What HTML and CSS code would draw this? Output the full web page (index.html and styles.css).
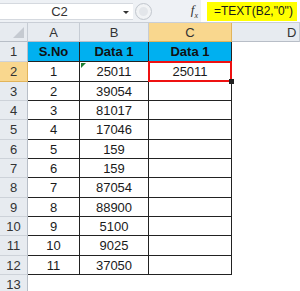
FILE: index.html
```html
<!DOCTYPE html>
<html lang="en">
<head>
    <meta charset="UTF-8">
    <title>TEXT function</title>
    <link rel="stylesheet" href="styles.css">
</head>
<body>
    <div class="formula-bar">
        <div class="name-box">
            <span class="ref">C2</span>
            <span class="arrow"></span>
        </div>
        <div class="fx-area">
            <span class="knob"></span>
            <span class="fx">f<sub>x</sub></span>
        </div>
        <div class="formula"><span class="hl">=TEXT(B2,"0")</span></div>
    </div>

    <div class="sheet">
        <div class="corner"><span class="tri"></span></div>
        <div class="col-head">A</div>
        <div class="col-head">B</div>
        <div class="col-head sel">C</div>
        <div class="col-head last">D</div>

        <div class="row-head">1</div>
        <div class="cell title">S.No</div>
        <div class="cell title">Data 1</div>
        <div class="cell title">Data 1</div>
        <div class="empty"></div>

        <div class="row-head sel">2</div>
        <div class="cell">1</div>
        <div class="cell num-text">25011</div>
        <div class="cell active">25011</div>
        <div class="empty"></div>

        <div class="row-head">3</div>
        <div class="cell">2</div>
        <div class="cell">39054</div>
        <div class="cell"></div>
        <div class="empty"></div>

        <div class="row-head">4</div>
        <div class="cell">3</div>
        <div class="cell">81017</div>
        <div class="cell"></div>
        <div class="empty"></div>

        <div class="row-head">5</div>
        <div class="cell">4</div>
        <div class="cell">17046</div>
        <div class="cell"></div>
        <div class="empty"></div>

        <div class="row-head">6</div>
        <div class="cell">5</div>
        <div class="cell">159</div>
        <div class="cell"></div>
        <div class="empty"></div>

        <div class="row-head">7</div>
        <div class="cell">6</div>
        <div class="cell">159</div>
        <div class="cell"></div>
        <div class="empty"></div>

        <div class="row-head">8</div>
        <div class="cell">7</div>
        <div class="cell">87054</div>
        <div class="cell"></div>
        <div class="empty"></div>

        <div class="row-head">9</div>
        <div class="cell">8</div>
        <div class="cell">88900</div>
        <div class="cell"></div>
        <div class="empty"></div>

        <div class="row-head">10</div>
        <div class="cell">9</div>
        <div class="cell">5100</div>
        <div class="cell"></div>
        <div class="empty"></div>

        <div class="row-head">11</div>
        <div class="cell">10</div>
        <div class="cell">9025</div>
        <div class="cell"></div>
        <div class="empty"></div>

        <div class="row-head">12</div>
        <div class="cell">11</div>
        <div class="cell">37050</div>
        <div class="cell"></div>
        <div class="empty"></div>

        <div class="row-head">13</div>
        <div class="empty"></div>
        <div class="empty"></div>
        <div class="empty"></div>
        <div class="empty"></div>
    </div>
</body>
</html>
```

FILE: styles.css
```css
body {
    margin: 0;
    width: 300px;
    height: 291px;
    overflow: hidden;
    background: #fff;
    font-family: "Liberation Sans", Arial, sans-serif;
    font-size: 13px;
    color: #1a1a1a;
}
.formula-bar {
    display: flex;
    height: 23px;
    background: #eef1f5;
    border-bottom: 1px solid #c9ced6;
    box-sizing: border-box;
}
.name-box {
    width: 133px;
    flex-shrink: 0;
    margin: 3px 0 2px 0;
    background: #fff;
    border-top: 1px solid #d5d9df;
    border-bottom: 1px solid #d5d9df;
    position: relative;
    display: flex;
    align-items: center;
}
.name-box .ref {
    flex: 1;
    text-align: center;
    padding-right: 14px;
    color: #333;
}
.arrow {
    position: absolute;
    right: 4px;
    top: 7px;
    width: 0;
    height: 0;
    border-left: 3px solid transparent;
    border-right: 3px solid transparent;
    border-top: 3px solid #333;
}
.fx-area {
    width: 68px;
    flex-shrink: 0;
    display: flex;
    align-items: center;
}
.knob {
    width: 15px;
    height: 15px;
    margin-left: 2px;
    border-radius: 50%;
    background: #e3e6ea;
    border: 1px solid #c3c8cf;
    box-shadow: inset 0 0 0 3px #f1f3f5;
}
.fx {
    margin-left: auto;
    margin-right: 3px;
    font-family: "Liberation Serif", serif;
    font-style: italic;
    font-size: 13px;
    color: #333;
}
.fx sub {
    font-size: 8px;
}
.formula {
    flex: 1;
    min-width: 0;
    overflow: hidden;
    background: #fff;
    display: flex;
    align-items: center;
    padding-left: 6px;
}
.hl {
    background: #ffff00;
    height: 19px;
    line-height: 19px;
    padding: 0 4px 0 7px;
    font-size: 12px;
    white-space: nowrap;
}
.sheet {
    display: grid;
    grid-template-columns: 28px 52px 69px 83px 1fr;
    grid-template-rows: 19px 20px 20px 19px 19px 20px 19px 19px 20px 19px 19px 20px 19px 20px;
}
.corner, .col-head, .row-head {
    background: #e7ebf0;
    color: #333;
    display: flex;
    align-items: center;
    justify-content: center;
    font-size: 13px;
}
.corner {
    border-right: 1px solid #c6ccd4;
    border-bottom: 1px solid #b8bec7;
    position: relative;
}
.tri {
    position: absolute;
    right: 3px;
    bottom: 3px;
    width: 0;
    height: 0;
    border-left: 11px solid transparent;
    border-bottom: 11px solid #c5cad1;
}
.col-head {
    border-right: 1px solid #c6ccd4;
    border-bottom: 1px solid #b8bec7;
}
.col-head.last {
    justify-content: flex-start;
    padding-left: 55px;
}
.row-head {
    border-right: 1px solid #b8bec7;
    border-bottom: 1px solid #cdd2d9;
}
.sel {
    background: #f9d78e;
    border-color: #e2b45a;
}
.cell {
    display: flex;
    align-items: center;
    justify-content: center;
    border-right: 1px solid #222;
    border-bottom: 1px solid #222;
}
.title {
    background: #00b0f0;
    font-weight: bold;
    color: #111;
}
.num-text {
    position: relative;
}
.num-text::before {
    content: "";
    position: absolute;
    left: 1px;
    top: 1px;
    border-top: 5px solid #1d7f32;
    border-right: 5px solid transparent;
}
.active {
    position: relative;
}
.active::after {
    content: "";
    position: absolute;
    left: -1px;
    top: -1px;
    right: -1px;
    bottom: -1px;
    border: 2px solid #ee1111;
}
.active::before {
    content: "";
    position: absolute;
    right: -3px;
    bottom: -3px;
    width: 5px;
    height: 5px;
    background: #222;
    z-index: 1;
}
.empty {
    background: #fff;
}
```
